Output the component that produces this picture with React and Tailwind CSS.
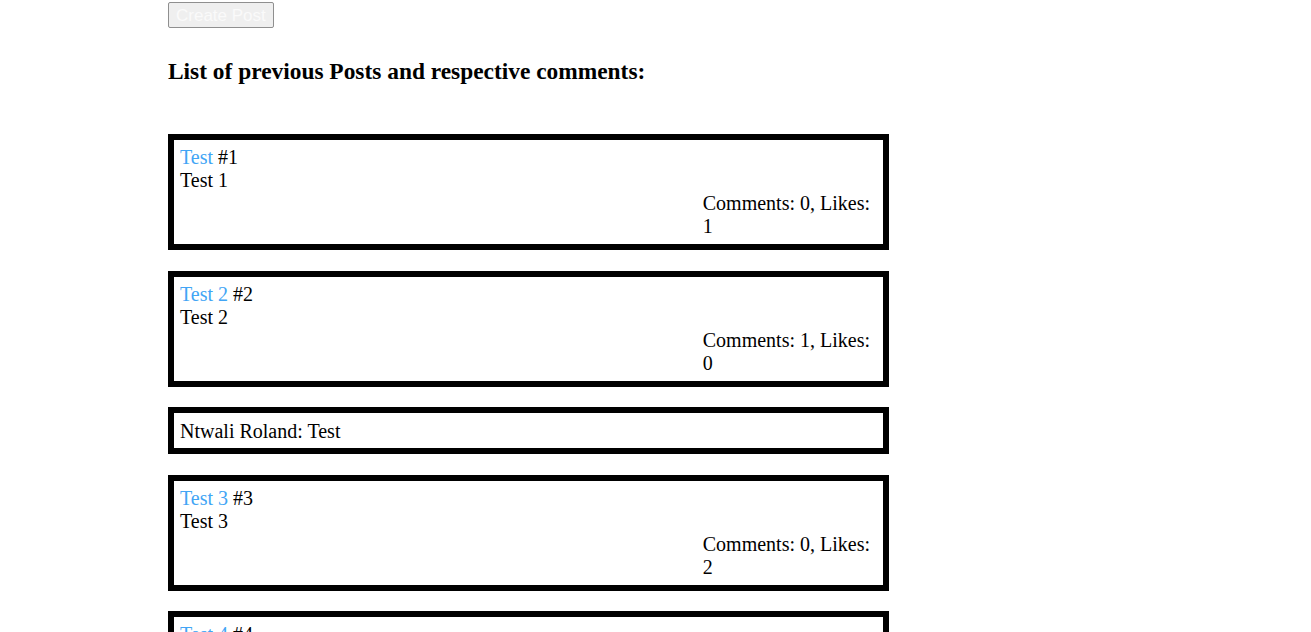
import React from 'react';

const posts = [
  { id: 1, title: 'Test', body: 'Test 1', comments: 0, likes: 1, replies: [] },
  { id: 2, title: 'Test 2', body: 'Test 2', comments: 1, likes: 0, replies: ['Ntwali Roland: Test'] },
  { id: 3, title: 'Test 3', body: 'Test 3', comments: 0, likes: 2, replies: [] },
  { id: 4, title: 'Test 4', body: 'Test 4', comments: 0, likes: 0, replies: [] },
];

function PostCard({ post }) {
  return (
    <div className="border-[6px] border-black p-[6px]">
      <div>
        <span className="text-[#42a5f5]">{post.title}</span> #{post.id}
      </div>
      <div>{post.body}</div>
      <div className="ml-[75%]">
        Comments: {post.comments}, Likes: {post.likes}
      </div>
    </div>
  );
}

function Comment({ text }) {
  return <div className="border-[6px] border-black px-[6px] pt-[7px] pb-[5px]">{text}</div>;
}

export default function App() {
  return (
    <div className="h-screen overflow-hidden bg-white text-black text-[20px] leading-[23px] font-['Liberation_Serif',serif]">
      <div className="ml-[168px] w-[721px] pt-[2px]">
        <button
          disabled
          className="block h-[26px] px-[7px] border border-[#8f8f8f] rounded-[2px] bg-[#efefef] text-[#fafafa] text-[17px] leading-none font-['Liberation_Sans',Arial,sans-serif]"
        >
          Create Post
        </button>

        <h3 className="mt-[30px] text-[23.4px] font-bold leading-[27px]">
          List of previous Posts and respective comments:
        </h3>

        <div className="mt-[49px] flex flex-col gap-[20.5px]">
          {posts.map((post) => (
            <React.Fragment key={post.id}>
              <PostCard post={post} />
              {post.replies.map((r, i) => (
                <Comment key={i} text={r} />
              ))}
            </React.Fragment>
          ))}
        </div>
      </div>
    </div>
  );
}
